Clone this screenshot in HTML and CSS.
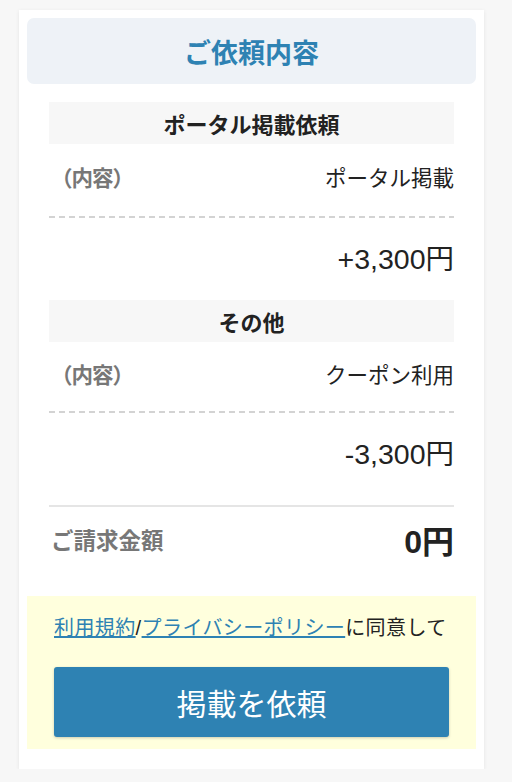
FILE: index.html
```html
<!DOCTYPE html>
<html lang="ja">
<head>
<meta charset="utf-8">
<title>ご依頼内容</title>
<link rel="stylesheet" href="styles.css">
</head>
<body>
<div class="card">
  <h1 class="title">ご依頼内容</h1>
  <div class="details">
    <section class="group">
      <h2 class="group-head">ポータル掲載依頼</h2>
      <div class="row">
        <span class="label">（内容）</span>
        <span class="value">ポータル掲載</span>
      </div>
      <div class="price">+3,300円</div>
    </section>
    <section class="group">
      <h2 class="group-head">その他</h2>
      <div class="row">
        <span class="label">（内容）</span>
        <span class="value">クーポン利用</span>
      </div>
      <div class="price">-3,300円</div>
    </section>
    <div class="total">
      <span class="total-label">ご請求金額</span>
      <span class="total-value">0円</span>
    </div>
  </div>
  <div class="agree">
    <p class="agree-text"><a href="#">利用規約</a>/<a href="#">プライバシーポリシー</a>に同意して</p>
    <button class="submit" type="button">掲載を依頼</button>
  </div>
</div>
</body>
</html>
```
FILE: styles.css
```css
* { box-sizing: border-box; }
html, body { margin: 0; padding: 0; }
body {
  background: #f7f7f7;
  font-family: "Liberation Sans", "Noto Sans CJK JP", sans-serif;
  color: #222;
  padding-top: 10px;
}
.card {
  width: 465px;
  margin-left: 19px;
  background: #fff;
  padding: 8px 8px 20px;
  box-shadow: 0 1px 4px rgba(0,0,0,0.08);
}
.title {
  margin: 0;
  height: 66px;
  background: #eef2f7;
  border-radius: 7px;
  color: #2e82b3;
  font-size: 27px;
  font-weight: 700;
  display: flex;
  align-items: center;
  justify-content: center;
}
.details {
  margin: 18px 22px 0;
}
.group-head {
  margin: 0;
  height: 42px;
  background: #f7f7f7;
  font-size: 22px;
  font-weight: 700;
  display: flex;
  align-items: center;
  justify-content: center;
}
.row {
  display: flex;
  justify-content: space-between;
  align-items: center;
  height: 74px;
  padding: 0 0 10px 2px;
  font-size: 21.5px;
  background: repeating-linear-gradient(to right, #d3d3d3 0 6px, transparent 6px 10px) bottom left / 100% 2px no-repeat;
}
.group + .group .row { height: 71px; padding-bottom: 9px; }
.label {
  color: #777;
  font-weight: 700;
  letter-spacing: -1px;
}
.value { color: #222; }
.price {
  height: 82px;
  display: flex;
  align-items: center;
  justify-content: flex-end;
  font-size: 28.5px;
  padding-bottom: 6px;
}
.total {
  margin-top: 10px;
  border-top: 2px solid #e5e5e5;
  height: 91px;
  display: flex;
  justify-content: space-between;
  align-items: center;
  padding: 0 0 26px 2px;
}
.total-label {
  color: #777;
  font-weight: 700;
  font-size: 22.5px;
}
.total-value {
  font-weight: 700;
  font-size: 32px;
}
.agree {
  background: #ffffdd;
  padding: 17px 27px 12px;
}
.agree-text {
  margin: 0;
  font-size: 20px;
  line-height: 30px;
  letter-spacing: 0.4px;
  color: #222;
  white-space: nowrap;
}
.agree-text a {
  color: #2e82b3;
  text-decoration: underline;
}
.submit {
  display: block;
  width: 100%;
  height: 70px;
  margin-top: 24px;
  border: 0;
  border-radius: 3px;
  background: #2e82b3;
  color: #fff;
  font-family: inherit;
  font-size: 30px;
  box-shadow: 0 1px 3px rgba(0,0,0,0.2);
}
```
